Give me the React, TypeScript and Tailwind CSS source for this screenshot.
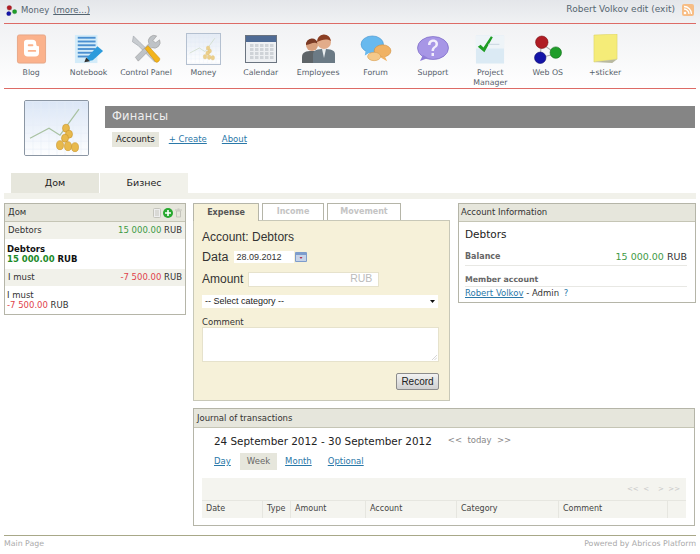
import React from "react";

const font = "font-['DejaVu_Sans',Verdana,sans-serif]";

const BlogIcon = () => (
  <svg width="31" height="30" viewBox="0 0 32 32">
    <rect x="1" y="1" width="30" height="30" rx="2" fill="#fbb28c" stroke="#e5a585" />
    <path d="M8 9a3 3 0 0 1 3-3h6a4 4 0 0 1 4 4v1a2 2 0 0 0 2 2h1v7a4 4 0 0 1-4 4H12a4 4 0 0 1-4-4z" fill="#fff" />
    <rect x="12" y="11" width="6" height="2" rx="1" fill="#fbb28c" />
    <rect x="12" y="17" width="9" height="2" rx="1" fill="#fbb28c" />
  </svg>
);

const NotebookIcon = () => (
  <svg width="30" height="30" viewBox="0 0 32 32">
    <rect x="1" y="1" width="24" height="30" fill="#d4ecf9" />
    {[3, 7, 11, 15, 19, 23].map((y) => (
      <rect key={y} x="4" y={y} width="19" height="2" fill="#4a8fd0" />
    ))}
    <path d="M14 25l11-12 6 5-11 10-6 1z" fill="#2c9bdc" />
    <path d="M13 25l4 4-6 1z" fill="#333" />
  </svg>
);

const ControlIcon = () => (
  <svg width="32" height="31" viewBox="0 0 32 32">
    <path d="M3 2l7 7 18 17-3 3L8 12 2 8z" fill="#c8ccd0" stroke="#9aa0a6" strokeWidth=".6" />
    <path d="M27 2a6 6 0 0 0-8 8L5 24l3 4 14-14a6 6 0 0 0 8-8l-4 3-3-2z" fill="#bfc3c7" stroke="#999" strokeWidth=".6" />
    <path d="M15 15l3-3 12 13c1 2-2 5-4 4z" fill="#f3b41b" stroke="#c78d10" strokeWidth=".6" />
  </svg>
);

const ChartArt = ({ size, faded }: { size: number; faded?: boolean }) => (
  <svg width={size} height={size * 0.88} viewBox="0 0 64 56" className="block">
    <defs>
      <linearGradient id={faded ? "cf" : "cn"} x1="0" y1="0" x2="0" y2="1">
        <stop offset="0" stopColor={faded ? "#e4ebf5" : "#dbe6f6"} />
        <stop offset="1" stopColor="#ffffff" />
      </linearGradient>
    </defs>
    <rect width="64" height="56" fill={`url(#${faded ? "cf" : "cn"})`} />
    <g stroke="#e4ecf7" strokeWidth=".5">
      {[8, 16, 24, 32, 40, 48, 56].map((x) => (
        <path key={x} d={`M${x} 0v56M0 ${x}h64`} />
      ))}
    </g>
    <path d="M5 37l19-10 11 7 19-26" fill="none" stroke={faded ? "#c6d4bc" : "#a9c2a2"} strokeWidth="1.2" />
    <g fill={faded ? "#eccf8a" : "#e8b94c"} stroke={faded ? "#dcbb70" : "#c9952c"} strokeWidth=".6">
      <ellipse cx="41" cy="27" rx="3.500" ry="4" />
      <ellipse cx="44" cy="33" rx="3.500" ry="4" />
      <ellipse cx="40" cy="37" rx="3.500" ry="4" />
      <ellipse cx="35" cy="44" rx="3.500" ry="4.500" />
      <ellipse cx="43" cy="45" rx="3.500" ry="4.500" />
      <ellipse cx="50" cy="46" rx="3.500" ry="4.500" />
    </g>
  </svg>
);

const CalendarIcon = () => (
  <svg width="32" height="28" viewBox="0 0 32 28">
    <rect x=".5" y=".5" width="31" height="27" fill="#eef0f3" stroke="#6b7480" />
    <rect x="1" y="1" width="30" height="6" fill="#4f6b95" />
    {[9, 13, 17, 21].map((y) =>
      [5, 10, 15, 20, 25].map((x) => <rect key={`${x}-${y}`} x={x} y={y} width="3.5" height="3" fill="#cfd3d8" />)
    )}
  </svg>
);

const EmployeesIcon = () => (
  <svg width="34" height="32" viewBox="0 0 34 32">
    <circle cx="11" cy="12" r="6" fill="#d8a07e" />
    <path d="M5 12a6 6 0 0 1 12-1c-4-3-7 0-12 1z" fill="#7a3a25" />
    <path d="M1 30v-6c0-5 4-6 10-6s9 2 9 6v6z" fill="#5e6468" />
    <circle cx="23" cy="9" r="7" fill="#e2ac8a" />
    <path d="M16 9a7 7 0 0 1 14-1c-5-3-9-1-14 1z" fill="#8b3f24" />
    <path d="M12 30v-9c0-4 5-5 11-5s11 1 11 5v9z" fill="#6b7a85" />
    <path d="M21 16h4l-2 9z" fill="#e9eef0" />
  </svg>
);

const ForumIcon = () => (
  <svg width="32" height="28" viewBox="0 0 32 30">
    <ellipse cx="12" cy="10" rx="12" ry="9" fill="#68b9ee" stroke="#3f90cc" strokeWidth=".6" />
    <path d="M5 16l-1 6 7-4z" fill="#68b9ee" />
    <ellipse cx="23" cy="17" rx="9" ry="6.5" fill="#f0b264" stroke="#cf8c3c" strokeWidth=".6" />
    <ellipse cx="14" cy="23" rx="7" ry="4.5" fill="#f5c98a" stroke="#d69a4c" strokeWidth=".6" />
    <path d="M25 22l3 6-7-4z" fill="#f0b264" />
  </svg>
);

const SupportIcon = () => (
  <svg width="32" height="26" viewBox="0 0 32 26">
    <ellipse cx="16" cy="12" rx="15.5" ry="11.5" fill="#a796e6" stroke="#6f5dc0" strokeWidth=".6" />
    <path d="M6 19l-3 6 8-3z" fill="#8f7dd8" />
    <path d="M11 9c0-7 10-7 10-1 0 4-4 3-4 7h-2.500c0-5 4-4 4-7 0-3-5-3-5 1zM14.500 17h2.500v3h-2.500z" fill="#f2eefc" />
  </svg>
);

const ProjectIcon = () => (
  <svg width="30" height="30" viewBox="0 0 32 31">
    <rect x="1" y="1" width="30" height="30" fill="#dbeaf4" />
    <rect x="1" y="1" width="30" height="14" fill="#eef4f8" />
    <path d="M3 13l3-2 3 3 8-12 2 1-9 16z" fill="#1f9d25" />
    <rect x="14" y="10" width="12" height="1" fill="#c6d4de" />
  </svg>
);

const WebOsIcon = ({ size = 29 }: { size?: number }) => (
  <svg width={size} height={size} viewBox="0 0 28 28">
    <path d="M8 8l14 10M8 8l-1 14M7 22l15-4" stroke="#aaa" strokeWidth="1" />
    <circle cx="8.5" cy="7" r="6" fill="#b01c24" stroke="#7a1217" strokeWidth=".6" />
    <circle cx="22" cy="17" r="5.5" fill="#1f9d2a" stroke="#14701c" strokeWidth=".6" />
    <circle cx="7" cy="22" r="5.5" fill="#1414a8" stroke="#0c0c70" strokeWidth=".6" />
  </svg>
);

const StickerIcon = () => (
  <svg width="27" height="30" viewBox="0 0 28 31">
    <path d="M2 1l24-1v26l-24 3z" fill="#f5ec78" stroke="#d8cf60" strokeWidth=".5" />
    <path d="M2 29l24-3-5 4z" fill="#b9b9a0" />
  </svg>
);

const RssIcon = () => (
  <svg width="12" height="12" viewBox="0 0 12 12">
    <rect width="12" height="12" rx="2" fill="#f7bd85" />
    <circle cx="3" cy="9" r="1.3" fill="#fff" />
    <path d="M2 5a5 5 0 0 1 5 5M2 2.5a7.5 7.5 0 0 1 7.5 7.5" fill="none" stroke="#fff" strokeWidth="1.3" />
  </svg>
);

const apps: { label: string; icon: React.ReactNode }[] = [
  { label: "Blog", icon: <BlogIcon /> },
  { label: "Notebook", icon: <NotebookIcon /> },
  { label: "Control\u00a0Panel", icon: <ControlIcon /> },
  {
    label: "Money",
    icon: (
      <div className="border border-[#b4c0d0]">
        <ChartArt size={33} faded />
      </div>
    ),
  },
  { label: "Calendar", icon: <CalendarIcon /> },
  { label: "Employees", icon: <EmployeesIcon /> },
  { label: "Forum", icon: <ForumIcon /> },
  { label: "Support", icon: <SupportIcon /> },
  { label: "Project Manager", icon: <ProjectIcon /> },
  { label: "Web OS", icon: <WebOsIcon /> },
  { label: "+sticker", icon: <StickerIcon /> },
];

const PanelHead = ({ children }: { children: React.ReactNode }) => (
  <div className="flex h-[18px] items-center justify-between border-b border-[#c5c5b5] bg-[#e6e6dc] pl-[3px] pr-[3px] text-[8.5px] text-[#333]">
    {children}
  </div>
);

const columns = [
  { label: "Date", w: "w-[61px]" },
  { label: "Type", w: "w-[28px]" },
  { label: "Amount", w: "w-[75px]" },
  { label: "Account", w: "w-[91px]" },
  { label: "Category", w: "w-[102px]" },
  { label: "Comment", w: "w-[109px]" },
  { label: "", w: "flex-1" },
];

export default function App() {
  return (
    <div className={`${font} h-[554px] w-[700px] overflow-hidden bg-white text-[8.5px] text-[#333]`}>
      {/* Top bar */}
      <div className="bg-gradient-to-b from-[#e4e6ea] to-[#f1f2f4] px-1">
        <div className="flex h-[24px] items-center justify-between border-b border-[#dd6b66] pb-[3px] pl-[2px] pr-[2px] text-[#556570]">
          <div className="flex items-center gap-[4px]">
            <WebOsIcon size={11} />
            <span>Money</span>
            <span className="underline">(more...)</span>
          </div>
          <div className="flex items-center gap-[7px] text-[9px]">
            <span>Robert Volkov edit (exit)</span>
            <RssIcon />
          </div>
        </div>
      </div>

      {/* App icons */}
      <div className="bg-gradient-to-b from-[#f1f2f4] to-white px-1">
        <div className="flex h-[65px] border-b border-[#dd6b66] pt-[10px]">
          {apps.map((a, i) => (
            <div
              key={a.label}
              className={`flex w-[57.4px] shrink-0 flex-col items-center text-center text-[7.8px] leading-[10px] text-[#56616a] ${i === 0 ? "-ml-[1.5px]" : ""}`}
            >
              <div className="flex h-[30px] items-center justify-center">{a.icon}</div>
              <span className="mt-[4px] px-[6px]">{a.label}</span>
            </div>
          ))}
        </div>
      </div>

      {/* Module header */}
      <div className="mt-[11px] flex pl-6 pr-[5px]">
        <div className="h-[56px] w-[65px] shrink-0 overflow-hidden rounded-[2px] border border-[#8b96a3]">
          <ChartArt size={64} />
        </div>
        <div className="ml-[16px] mt-[6px] flex-1">
          <div className="flex h-[22px] items-center bg-[#858585] pl-[7px] text-[11.500px] tracking-[0.2px] text-[#eee]">Финансы</div>
          <div className="mt-[4px] flex items-center pl-[7px]">
            <span className="bg-[#e6e6dc] px-[4px] py-[1px] text-[#222]">Accounts</span>
            <a className="ml-[10px] text-[#2a78a8] underline">+ Create</a>
            <a className="ml-[15px] text-[#2a78a8] underline">About</a>
          </div>
        </div>
      </div>

      {/* Group tabs */}
      <div className="mt-[17px] px-1">
        <div className="flex gap-[1px] pl-[7px]">
          <div className="flex h-5 w-[88px] items-center justify-center bg-[#e6e6dc] text-[9.5px] text-[#222]">Дом</div>
          <div className="flex h-5 w-[88px] items-center justify-center bg-[#f1f1ea] text-[9.5px] text-[#222]">Бизнес</div>
        </div>
        <div className="h-[6px] bg-[#f1f1ea]" />
      </div>

      <div className="mt-1 flex items-start px-1">
        {/* Accounts */}
        <div className="w-[182px] shrink-0 border border-[#b5b5a8]">
          <PanelHead>
            <span>Дом</span>
            <div className="flex items-center gap-[2px]">
              <svg width="8" height="10" viewBox="0 0 8 10"><rect x=".5" y=".5" width="7" height="9" rx="1" fill="#eee" stroke="#c4c4bc" /><path d="M2 3h4M2 5h4M2 7h4" stroke="#c4c4bc" /></svg>
              <svg width="10" height="10" viewBox="0 0 10 10"><circle cx="5" cy="5" r="5" fill="#27a82f" /><path d="M5 2v6M2 5h6" stroke="#fff" strokeWidth="1.6" /></svg>
              <svg width="7" height="10" viewBox="0 0 7 10"><path d="M1.500 3h4v6h-4zM0 2h7M2.500 1h2" fill="none" stroke="#c4c4bc" /></svg>
            </div>
          </PanelHead>
          <div className="flex h-[17px] items-center justify-between bg-[#f1f1ea] pl-[3px] pr-[3px]">
            <span>Debtors</span>
            <span><span className="text-[#3e9a45]">15 000.00</span> RUB</span>
          </div>
          <div className="h-[30px] pl-[2px] pt-[5px] font-bold leading-[10px] text-[#111]">
            <div>Debtors</div>
            <div><span className="text-[#1c8a28]">15 000.00</span> RUB</div>
          </div>
          <div className="flex h-[17px] items-center justify-between bg-[#f1f1ea] pl-[3px] pr-[3px]">
            <span>I must</span>
            <span><span className="text-[#e0424a]">-7 500.00</span> RUB</span>
          </div>
          <div className="h-[28px] pl-[2px] pt-[4px] leading-[10px]">
            <div>I must</div>
            <div><span className="text-[#e0424a]">-7 500.00</span> RUB</div>
          </div>
        </div>

        {/* Operation form */}
        <div className="ml-[7px] w-[257px] shrink-0">
          <div className="flex h-[17px] items-end gap-[3px] text-[8px] font-bold">
            <div className="z-10 -mb-px flex h-[18px] w-[66px] items-center justify-center rounded-t-[1px] border border-b-0 border-[#b5b5a8] bg-[#f6f1d9] text-[#555]">Expense</div>
            <div className="flex h-[17px] w-[62px] items-center justify-center border border-b-0 border-[#b5b5a8] text-[#c4c4c4]">Income</div>
            <div className="flex h-[17px] w-[74px] items-center justify-center border border-b-0 border-[#b5b5a8] text-[#c4c4c4]">Movement</div>
          </div>
          <div className="h-[181px] border border-[#c8c8b8] bg-[#f6f1d9] px-2 pt-[8px] font-['Liberation_Sans',Arial,sans-serif] text-[#333]">
            <div className="text-[12px] leading-[16px]">Account: Debtors</div>
            <div className="mt-[2px] flex h-[20px] items-center">
              <span className="text-[12.500px]">Data</span>
              <span className="ml-[6px] w-[60px] bg-white pl-[2px] text-[9px] leading-[12px]">28.09.2012</span>
              <svg className="ml-[1px]" width="12" height="10" viewBox="0 0 12 10"><rect width="12" height="10" rx="1" fill="#7d9ccc" /><rect x="1" y="3" width="10" height="6" fill="#c6d3e8" /><path d="M4.500 5l1.500 2L7.500 5z" fill="#b03050" /></svg>
            </div>
            <div className="mt-[2px] flex h-[20px] items-center">
              <span className="text-[12px]">Amount</span>
              <div className="ml-[5px] flex h-[15px] w-[131px] items-center justify-end border border-[#e6e2cc] bg-white pr-[6px] text-[10.500px] text-[#bbb]">RUB</div>
            </div>
            <div className="mt-[6px] flex h-[13px] w-[236px] items-center justify-between bg-white pl-[3px] pr-[3px] text-[9px] text-[#222]">
              <span>-- Select category --</span>
              <svg width="5" height="3" viewBox="0 0 5 3"><path d="M0 0h5L2.5 3z" fill="#111" /></svg>
            </div>
            <div className={`${font} mt-[10px] text-[8.5px] leading-[9px]`}>Comment</div>
            <div className="relative h-[35px] w-[237px] border border-[#e6e2cc] bg-white">
              <svg className="absolute right-[1px] bottom-[1px]" width="6" height="6" viewBox="0 0 6 6"><path d="M6 1L1 6M6 3.500L3.500 6" stroke="#bbb" strokeWidth=".6" /></svg>
            </div>
            <div className="mt-[11px] flex w-[237px] justify-end">
              <div className="flex h-[17px] w-[43px] items-center justify-center rounded-[2px] border border-[#8c8c8c] bg-gradient-to-b from-[#f2f2f2] to-[#d0d0d0] text-[10px] text-[#222]">Record</div>
            </div>
          </div>
        </div>

        {/* Account info */}
        <div className="ml-[8px] w-[238px] shrink-0 border border-[#b5b5a8]">
          <PanelHead><span className="-ml-px">Account Information</span></PanelHead>
          <div className="pb-[3px] pl-[6px] pr-[8px] pt-[5px]">
            <div className="text-[10.500px] leading-[14px] text-[#222]">Debtors</div>
            <div className="mt-[9px] flex h-[16px] items-center justify-between border-b border-[#e8e8e4] pb-[1px]">
              <span className="text-[8px] font-bold text-[#666]">Balance</span>
              <span className="text-[9.500px]"><span className="text-[#3e9a45]">15 000.00</span> RUB</span>
            </div>
            <div className="mt-[8px] border-b border-[#e8e8e4] text-[7.800px] font-bold leading-[12px] text-[#666]">Member account</div>
            <div className="leading-[12px]">
              <a className="text-[#2a78a8] underline">Robert Volkov</a> - Admin <span className="ml-[2px] text-[#2a78a8]">?</span>
            </div>
          </div>
        </div>
      </div>

      {/* Journal */}
      <div className="ml-[193px] mr-[5px] mt-[7px] h-[118px] border border-[#b5b5a8]">
        <div className="flex h-[19px] items-center border-b border-[#c5c5b5] bg-[#e6e6dc] pl-[3px]">Journal of transactions</div>
        <div className="flex items-center pl-[20px] pt-[5px]">
          <span className="text-[10.400px] leading-[16px] text-[#222]">24 September 2012 - 30 September 2012</span>
          <span className="ml-[16px] -mt-px text-[#888]">&lt;&lt;&nbsp; today &nbsp;&gt;&gt;</span>
        </div>
        <div className="mt-[4px] flex items-center pl-[20px]">
          <a className="text-[#2a78a8] underline">Day</a>
          <span className="ml-[9px] bg-[#e6e6dc] px-[7px] py-[2px] text-[#666]">Week</span>
          <a className="ml-[8px] text-[#2a78a8] underline">Month</a>
          <a className="ml-[16px] text-[#2a78a8] underline">Optional</a>
        </div>
        <div className="mx-2 mt-[8px] bg-[#f4f4ef]">
          <div className="flex h-[22px] items-center justify-end pr-[6px] text-[7px] text-[#c8c8c8]">
            &lt;&lt;&nbsp;&nbsp;&lt;&nbsp;&nbsp;&nbsp;&nbsp;&gt;&nbsp;&nbsp;&gt;&gt;
          </div>
          <div className="flex h-[18px] border-t border-[#e6e6e0] bg-[#f4f4ef] text-[8px] text-[#444]">
            {columns.map((c, i) => (
              <div key={i} className={`${c.w} flex items-center border-r border-[#e6e6e0] px-1 last:border-r-0`}>{c.label}</div>
            ))}
          </div>
        </div>
      </div>

      {/* Footer */}
      <div className="mx-1 mt-[9px] flex justify-between border-t border-[#a8a888] pt-[2px] text-[7.800px] text-[#aaa]">
        <span>Main Page</span>
        <span>Powered by Abricos Platform</span>
      </div>
    </div>
  );
}
